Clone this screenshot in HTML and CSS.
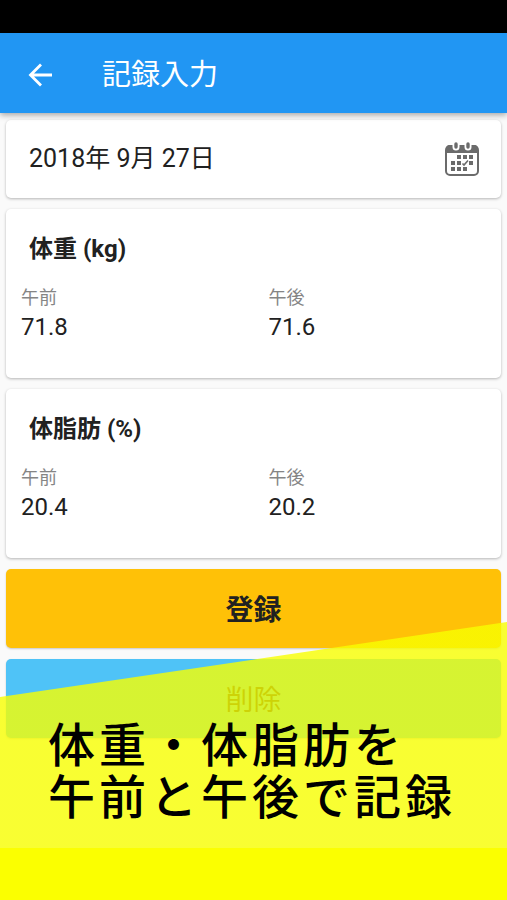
FILE: index.html
```html
<!DOCTYPE html>
<html lang="ja">
<head>
  <meta charset="UTF-8" />
  <meta name="viewport" content="width=device-width, initial-scale=1.0"/>
  <title>記録入力</title>
  <link rel="stylesheet" href="styles.css">
</head>
<body>

  <div class="status-bar"></div>

  <header class="app-bar">
    <button type="button" class="icon-btn" aria-label="戻る">
      <svg width="24" height="24" viewBox="0 0 24 24" fill="none" stroke="#fff" stroke-width="2.8">
        <path d="M24 12H3M13 1.500L2.500 12l10.500 10.500"/>
      </svg>
    </button>
    <h1>記録入力</h1>
  </header>

  <main>
    <form class="record-form">
      <div class="card date-card">
        <input type="text" class="date-input" aria-label="日付" value="2018年 9月 27日" readonly>
        <button type="button" class="icon-btn" aria-label="カレンダー">
          <svg width="34" height="36" viewBox="0 0 34 36">
            <rect x="1" y="5" width="32" height="29" rx="4" fill="none" stroke="#6b6b6b" stroke-width="2"/>
            <path d="M1 12V8a4 4 0 0 1 4-4h24a4 4 0 0 1 4 4v4z" fill="#6b6b6b"/>
            <path d="M11 3v3M23 3v3" stroke="#fff" stroke-width="7" stroke-linecap="round"/>
            <path d="M11 3v3M23 3v3" stroke="#6b6b6b" stroke-width="3.4" stroke-linecap="round"/>
            <path d="M12 14h4v4h-4zM18 14h4v4h-4zM24 14h4v4h-4zM6 20h4v4H6zM12 20h4v4h-4zM24 20h4v4h-4zM6 26h4v4H6zM12 26h4v4h-4zM18 26h4v4h-4z" fill="#6b6b6b"/>
            <path d="M17.500 22.500l1.500 1.500 4-4.500" fill="none" stroke="#6b6b6b" stroke-width="1.6"/>
          </svg>
        </button>
      </div>

      <section class="card">
        <h2>体重 (kg)</h2>
        <div class="fields">
          <div class="field">
            <label for="weightAm">午前</label>
            <input type="text" id="weightAm" inputmode="decimal" value="71.8">
          </div>
          <div class="field">
            <label for="weightPm">午後</label>
            <input type="text" id="weightPm" inputmode="decimal" value="71.6">
          </div>
        </div>
      </section>

      <section class="card">
        <h2>体脂肪 (%)</h2>
        <div class="fields">
          <div class="field">
            <label for="fatAm">午前</label>
            <input type="text" id="fatAm" inputmode="decimal" value="20.4">
          </div>
          <div class="field">
            <label for="fatPm">午後</label>
            <input type="text" id="fatPm" inputmode="decimal" value="20.2">
          </div>
        </div>
      </section>

      <button type="submit" class="btn saveBtn">登録</button>
      <button type="button" class="btn deleteBtn">削除</button>
    </form>
  </main>

  <div class="banner">
    <p>体重・体脂肪を<br>午前と午後で記録</p>
  </div>

</body>
</html>
```
FILE: styles.css
```css
* {
  box-sizing: border-box;
}

body {
  font-family: Roboto, "Noto Sans CJK JP", sans-serif;
  margin: 0;
  min-height: 100vh;
  background-color: #fafafa;
  color: #212121;
  position: relative;
}

h1, h2, p {
  margin: 0;
}

input,
button {
  font-family: inherit;
  color: inherit;
  border: none;
  padding: 0;
  background: none;
}

button {
  cursor: pointer;
}

.status-bar {
  height: 33px;
  background-color: #000;
}

.app-bar {
  display: flex;
  align-items: center;
  gap: 50px;
  height: 80px;
  padding: 3px 28px 0;
  background-color: #2196f3;
  color: #fff;
  position: relative;
  box-shadow: 0 2px 6px rgba(0, 0, 0, 0.35);
}

.app-bar h1 {
  font-size: 29px;
  line-height: 40px;
  font-weight: 400;
}

.icon-btn {
  display: flex;
}

.record-form {
  display: flex;
  flex-direction: column;
  gap: 11px;
  padding: 7px 6px;
}

.card {
  background-color: #fff;
  border-radius: 5px;
  box-shadow: 0 1px 3px rgba(0, 0, 0, 0.28);
}

.date-card {
  display: flex;
  align-items: center;
  justify-content: space-between;
  height: 78px;
  padding: 0 22px 0 23px;
}

.date-input {
  flex: 1;
  min-width: 0;
  font-size: 25px;
  line-height: 36px;
}

.card h2 {
  padding: 22px 23px 0;
  font-size: 24px;
  line-height: 36px;
  font-weight: 700;
}

.fields {
  display: grid;
  grid-template-columns: 1fr 1fr;
  padding: 18px 0 35px;
}

.field {
  display: flex;
  flex-direction: column;
  padding: 0 15px;
}

.field label {
  font-size: 18px;
  line-height: 26px;
  color: #858585;
}

.field input {
  width: 100%;
  font-size: 24px;
  line-height: 32px;
}

.btn {
  height: 79px;
  padding-bottom: 2px;
  border-radius: 5px;
  font-size: 28px;
  box-shadow: 0 1px 2px rgba(0, 0, 0, 0.2);
}

.saveBtn {
  background-color: #ffc107;
  font-weight: 700;
}

.deleteBtn {
  background-color: #4fc3f7;
}

/* Slanted caption laid over the bottom of the form */
.banner {
  position: absolute;
  left: 0;
  right: 0;
  bottom: 0;
  padding: 98px 48px 76px;
  color: #000;
  background: linear-gradient(to top, #fbff00 52px, rgba(248, 255, 0, 0.8) 52px);
  clip-path: polygon(0 75px, 100% 0, 100% 100%, 0 100%);
}

.banner p {
  font-size: 47px;
  line-height: 52px;
  font-weight: 500;
  letter-spacing: 4px;
  white-space: nowrap;
}
```
